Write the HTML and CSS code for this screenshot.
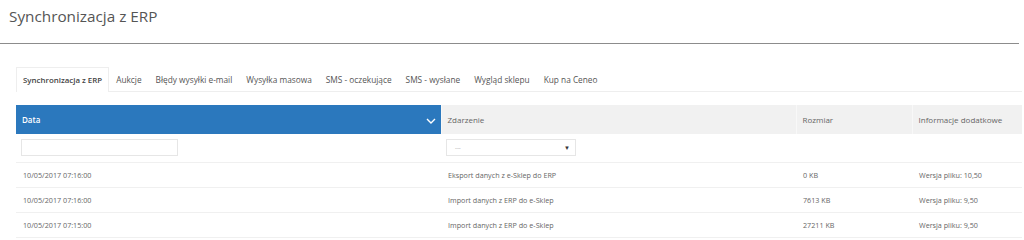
FILE: index.html
```html
<!DOCTYPE html>
<html lang="pl">
<head>
    <meta charset="UTF-8">
    <title>Synchronizacja z ERP</title>
    <link rel="stylesheet" href="styles.css">
</head>
<body>
    <!-- Page header -->
    <div class="page-header">
        <h1>Synchronizacja z ERP</h1>
    </div>

    <div class="content">
        <!-- Tabs -->
        <ul class="tabs">
            <li class="tab active">Synchronizacja z ERP</li>
            <li class="tab">Aukcje</li>
            <li class="tab">Błędy wysyłki e-mail</li>
            <li class="tab">Wysyłka masowa</li>
            <li class="tab">SMS - oczekujące</li>
            <li class="tab">SMS - wysłane</li>
            <li class="tab">Wygląd sklepu</li>
            <li class="tab">Kup na Ceneo</li>
        </ul>

        <!-- Sync log table -->
        <table class="grid">
            <thead>
                <tr>
                    <th class="col-date sorted">Data
                        <svg class="chevron" width="10" height="6" viewBox="0 0 10 6"><path d="M1 1l4 4 4-4" fill="none" stroke="#fff" stroke-width="1.4"/></svg>
                    </th>
                    <th class="col-event">Zdarzenie</th>
                    <th class="col-size">Rozmiar</th>
                    <th class="col-info">Informacje dodatkowe</th>
                </tr>
                <tr class="filters">
                    <td><input type="text" class="filter-input"></td>
                    <td><div class="filter-select"><span>---</span><span class="arrow">▼</span></div></td>
                    <td></td>
                    <td></td>
                </tr>
            </thead>
            <tbody>
                <tr>
                    <td>10/05/2017 07:16:00</td>
                    <td>Eksport danych z e-Sklep do ERP</td>
                    <td>0 KB</td>
                    <td>Wersja pliku: 10,50</td>
                </tr>
                <tr>
                    <td>10/05/2017 07:16:00</td>
                    <td>Import danych z ERP do e-Sklep</td>
                    <td>7613 KB</td>
                    <td>Wersja pliku: 9,50</td>
                </tr>
                <tr>
                    <td>10/05/2017 07:15:00</td>
                    <td>Import danych z ERP do e-Sklep</td>
                    <td>27211 KB</td>
                    <td>Wersja pliku: 9,50</td>
                </tr>
            </tbody>
        </table>
    </div>
</body>
</html>
```

FILE: styles.css
```css
* {
    margin: 0;
    padding: 0;
    box-sizing: border-box;
}

body {
    font-family: "Open Sans", sans-serif;
    color: #666;
    background: #fff;
    width: 1024px;
    overflow: hidden;
}

/* Page title */
.page-header {
    height: 44px;
    border-bottom: 1px solid #8c8c8c;
    margin-right: 5px;
    padding: 6px 0 0 9px;
}

.page-header h1 {
    font-size: 15.3px;
    font-weight: 400;
    color: #555;
    line-height: 20px;
}

.content {
    padding: 23px 2px 0 16px;
}

/* Tabs */
.tabs {
    list-style: none;
    display: flex;
    height: 25px;
    border-bottom: 1px solid #eee;
    margin-bottom: 13px;
}

.tab {
    font-size: 8.3px;
    color: #555;
    padding: 0 6px;
    line-height: 24px;
    border: 1px solid transparent;
    border-bottom: none;
}

.tab.active {
    font-size: 7.9px;
    font-weight: 600;
    color: #444;
    border-color: #eee;
    background: #fff;
    height: 25px;
}

/* Table */
.grid {
    width: 100%;
    border-collapse: collapse;
    font-size: 7.2px;
}

.grid th {
    height: 29px;
    background: #f1f1f1;
    font-size: 8px;
    font-weight: 400;
    color: #666;
    text-align: left;
    padding: 0 6px;
    border-left: 1px solid #f8f8f8;
}

.grid th.sorted {
    background: #2b78bd;
    color: #fff;
    font-weight: 600;
    position: relative;
    border-left: none;
}

.chevron {
    position: absolute;
    right: 5px;
    top: 13px;
}

.col-date { width: 425px; }
.col-event { width: 355px; }
.col-size { width: 116px; }

.grid td {
    height: 25px;
    padding: 0 7px;
    border-bottom: 1px solid #f0f0f0;
    color: #666;
}

.grid .filters td {
    height: 28px;
    padding: 0 5px;
}

.filter-input {
    width: 157px;
    height: 17px;
    border: 1px solid #e6e6e6;
    display: block;
}

.filter-select {
    width: 130px;
    height: 17px;
    border: 1px solid #e6e6e6;
    display: flex;
    justify-content: space-between;
    align-items: center;
    padding: 0 5px 0 8px;
    font-size: 6px;
    color: #999;
}

.filter-select .arrow {
    font-size: 6px;
    color: #333;
}
```
